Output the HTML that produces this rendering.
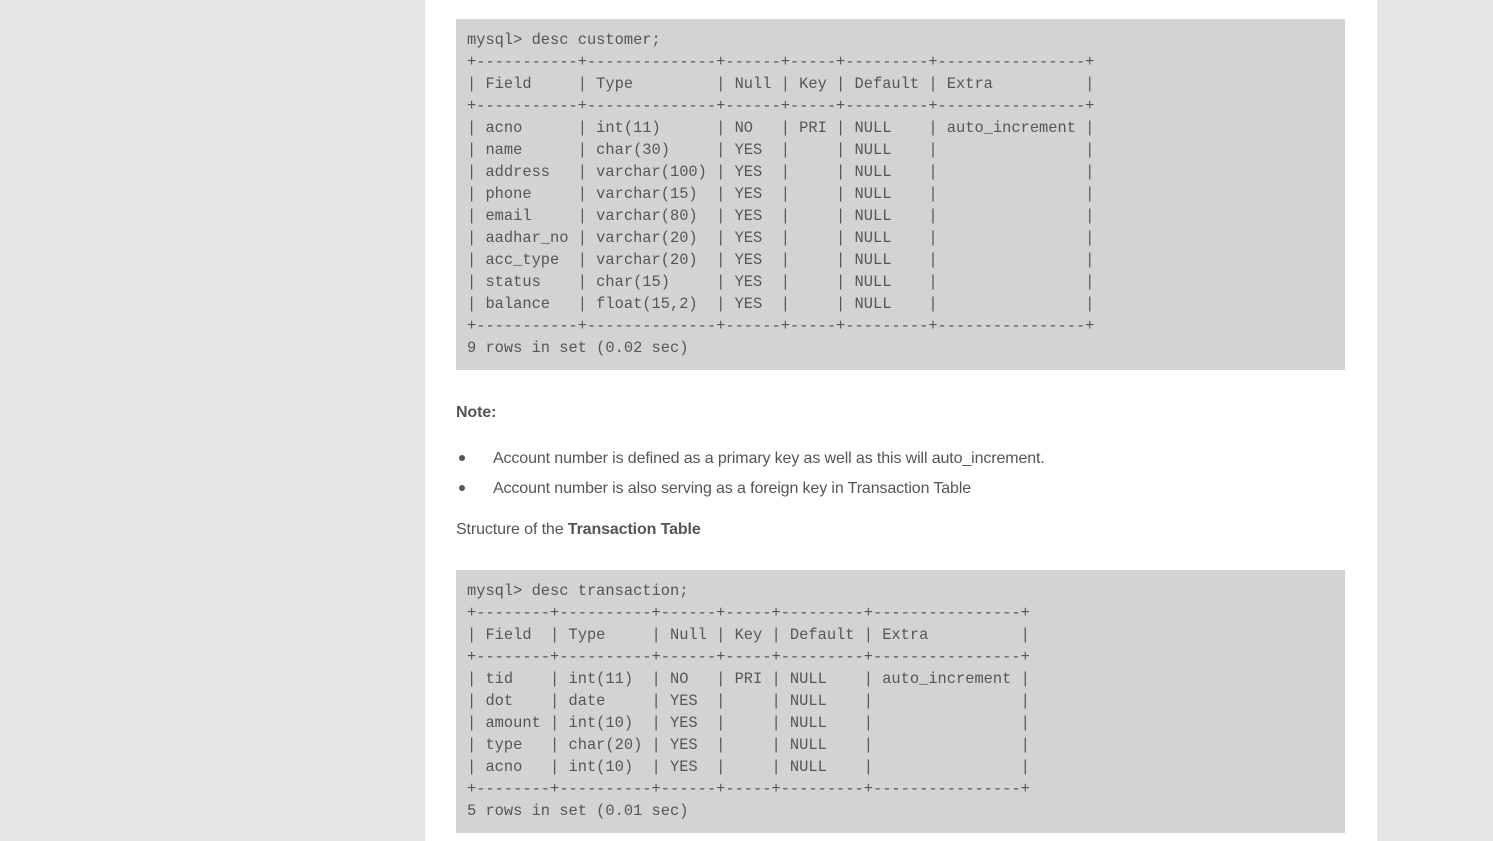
<!DOCTYPE html>
<html><head><meta charset="utf-8"><style>
html,body{margin:0;padding:0;background:#e6e6e6;width:1493px;height:841px;overflow:hidden}
.page{position:absolute;left:425px;top:0;width:952px;height:841px;background:#fff}
pre{position:absolute;left:31px;width:889px;margin:0;background:#d3d3d3;color:#555;font-family:"Liberation Mono",monospace;font-size:15.38px;line-height:22px;padding:10px 0 11px 11px;box-sizing:border-box}
.t{position:absolute;left:31px;font-family:"Liberation Sans",sans-serif;font-size:16px;color:#555;letter-spacing:-0.12px;line-height:20px;white-space:nowrap}
.b{position:absolute;left:34px;width:6px;height:6px;border-radius:50%;background:#555}
</style></head><body><div class="page">
<pre style="top:19px;height:351px">mysql&gt; desc customer;
+-----------+--------------+------+-----+---------+----------------+
| Field     | Type         | Null | Key | Default | Extra          |
+-----------+--------------+------+-----+---------+----------------+
| acno      | int(11)      | NO   | PRI | NULL    | auto_increment |
| name      | char(30)     | YES  |     | NULL    |                |
| address   | varchar(100) | YES  |     | NULL    |                |
| phone     | varchar(15)  | YES  |     | NULL    |                |
| email     | varchar(80)  | YES  |     | NULL    |                |
| aadhar_no | varchar(20)  | YES  |     | NULL    |                |
| acc_type  | varchar(20)  | YES  |     | NULL    |                |
| status    | char(15)     | YES  |     | NULL    |                |
| balance   | float(15,2)  | YES  |     | NULL    |                |
+-----------+--------------+------+-----+---------+----------------+
9 rows in set (0.02 sec)</pre>
<div class="t" style="top:403px;font-weight:bold">Note:</div>
<div class="b" style="top:455px"></div>
<div class="t" style="top:449px;left:68px">Account number is defined as a primary key as well as this will auto_increment.</div>
<div class="b" style="top:485px"></div>
<div class="t" style="top:479px;left:68px">Account number is also serving as a foreign key in Transaction Table</div>
<div class="t" style="top:520px">Structure of the <b>Transaction Table</b></div>
<pre style="top:570px;height:263px">mysql&gt; desc transaction;
+--------+----------+------+-----+---------+----------------+
| Field  | Type     | Null | Key | Default | Extra          |
+--------+----------+------+-----+---------+----------------+
| tid    | int(11)  | NO   | PRI | NULL    | auto_increment |
| dot    | date     | YES  |     | NULL    |                |
| amount | int(10)  | YES  |     | NULL    |                |
| type   | char(20) | YES  |     | NULL    |                |
| acno   | int(10)  | YES  |     | NULL    |                |
+--------+----------+------+-----+---------+----------------+
5 rows in set (0.01 sec)</pre>
</div></body></html>
